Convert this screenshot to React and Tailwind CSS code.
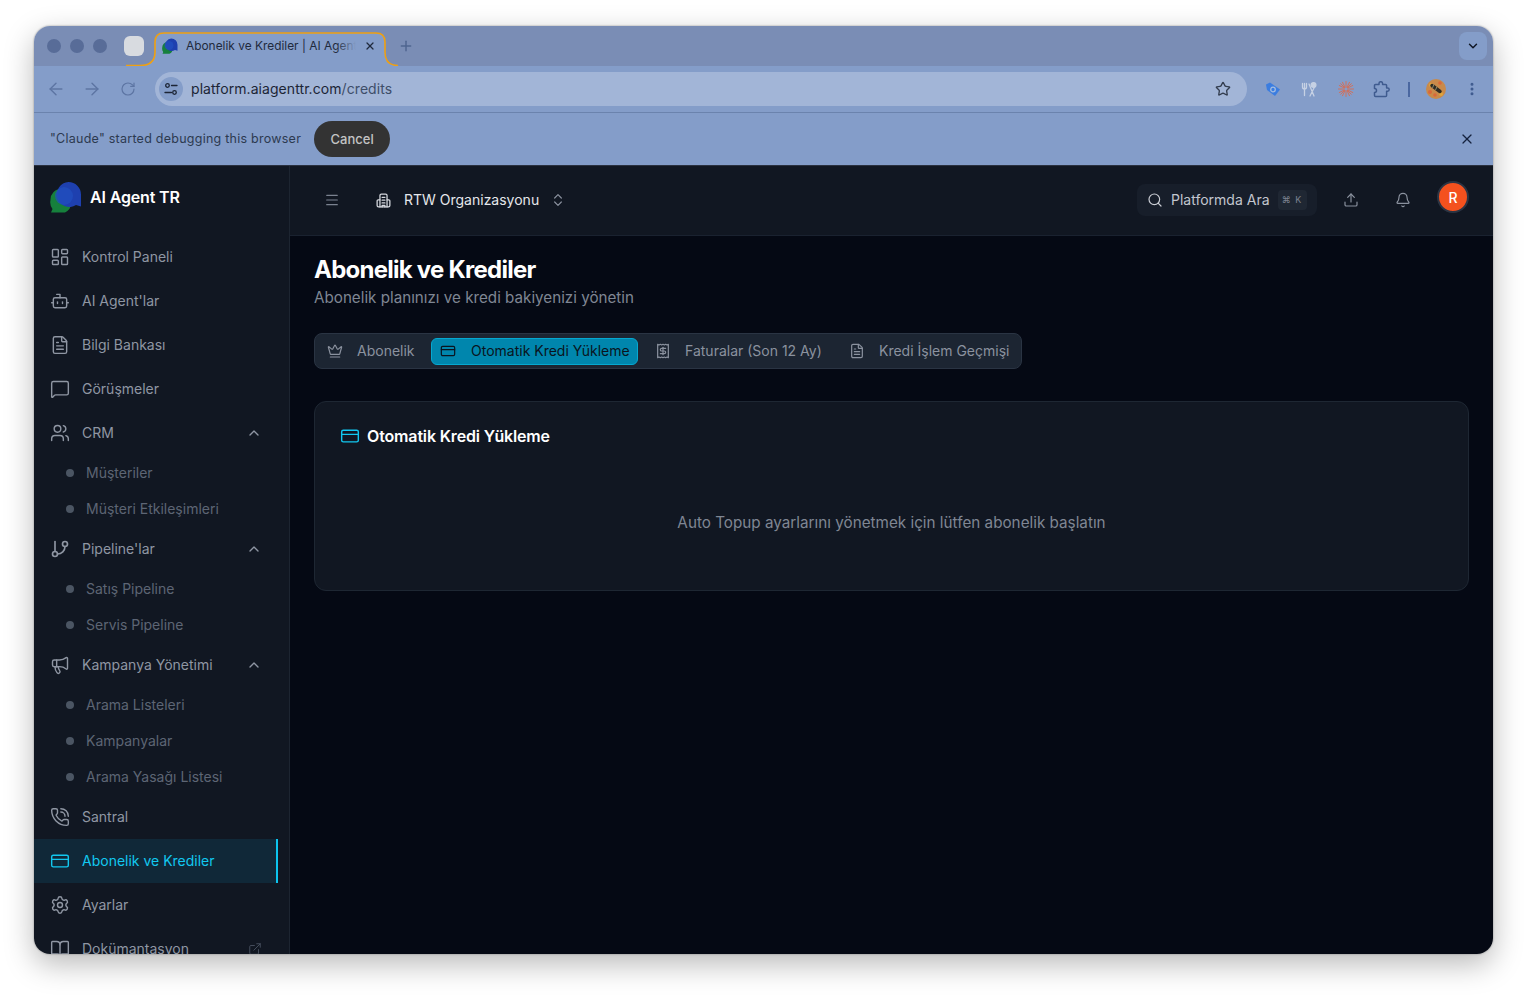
import React from "react";
import {
  ArrowLeft, ArrowRight, RotateCw, Star, X, Plus, ChevronDown, ChevronUp, ChevronsUpDown, EllipsisVertical,
  LayoutDashboard, Bot, FileText, MessageSquare, Users, Megaphone, PhoneCall, CreditCard, Settings, BookOpen,
  ExternalLink, Menu, Search, Upload, Bell, Crown, Receipt,
} from "lucide-react";

const Logo = ({ className }) => (
  <svg className={className} viewBox="0 0 32 32">
    <path d="M11 8a10.500 10.500 0 0 1 10 13 10.500 10.500 0 0 1-6 10.500H1l1.500-3.500A11 11 0 0 1 .500 19 10.500 10.500 0 0 1 11 8Z" fill="#16803c" />
    <path d="M18.500 1a12.500 12.500 0 0 1 12.500 12.500V25.500l-5-1.500A12.500 12.500 0 1 1 18.500 1Z" fill="#1e40af" />
    <circle cx="14" cy="15" r="9" fill="#2150c0" opacity="0.7" />
  </svg>
);

const PipelineIcon = ({ className }) => (
  <svg className={className} viewBox="0 0 24 24" fill="none" stroke="currentColor" strokeWidth="2" strokeLinecap="round" strokeLinejoin="round">
    <path d="M6 3v12" />
    <circle cx="18" cy="6" r="3" />
    <circle cx="6" cy="18" r="3" />
    <path d="M18 9a9 9 0 0 1-9 9" />
  </svg>
);

const OrgIcon = ({ className }) => (
  <svg className={className} viewBox="0 0 24 24" fill="none" stroke="currentColor" strokeWidth="1.800" strokeLinecap="round" strokeLinejoin="round">
    <path d="M7 21V5a2 2 0 0 1 2-2h6a2 2 0 0 1 2 2v16" />
    <path d="M7 11H4.500A1.500 1.500 0 0 0 3 12.500V19a2 2 0 0 0 2 2h14a2 2 0 0 0 2-2v-6.500a1.500 1.500 0 0 0-1.500-1.500H17" />
    <path d="M10 7.500h4M10 11.500h4M10 15.500h4M10 21v-2h4v2" />
  </svg>
);

const SiteIcon = () => (
  <svg className="w-[14px] h-[14px] text-[#1c2536]" viewBox="0 0 14 14" fill="none" stroke="currentColor" strokeWidth="1.300" strokeLinecap="round">
    <circle cx="3.500" cy="3.500" r="1.800" />
    <path d="M7.500 3.500H13M1 10.500h6.500" />
    <circle cx="10.500" cy="10.500" r="1.800" />
  </svg>
);

const TagIcon = () => (
  <svg className="w-[16px] h-[16px]" viewBox="0 0 16 16">
    <path d="M1 3.500 5 1.500 15 8.500 10 15 2 9Z" fill="#3b7de0" />
    <circle cx="8" cy="8.500" r="2.300" fill="none" stroke="#a2bce0" strokeWidth="1.300" />
  </svg>
);

const ForkIcon = () => (
  <svg className="w-[16px] h-[16px]" viewBox="0 0 16 16" fill="none" stroke="#c6d1e4" strokeWidth="1.300" strokeLinecap="round">
    <path d="M1.500 2.500v3.500a2 2 0 0 0 4 0V2.500M3.500 2.500v12M8 3l5 12M14 5 9 15" />
    <circle cx="12.500" cy="4" r="2.400" fill="#c6d1e4" />
  </svg>
);

const BurstIcon = () => (
  <svg className="w-[16px] h-[16px]" viewBox="0 0 16 16" stroke="#d0705c" strokeWidth="1" strokeLinecap="round">
    <path d="M8 .500v5.500M8 10v5.500M.500 8H6M10 8h5.500M2.700 2.700l3.900 3.900M9.400 9.400l3.900 3.900M13.300 2.700 9.400 6.600M6.600 9.400l-3.900 3.900M4.500 1.300l2.500 5M9 9.700l2.500 5M11.500 1.300 9 6.300M7 9.700l-2.500 5M1.300 4.500l5 2.500M9.700 9l5 2.500M14.700 4.500l-5 2.500M6.300 9l-5 2.500" />
  </svg>
);

const ExtensionIcon = () => (
  <svg className="w-[17px] h-[17px]" viewBox="0 0 17 17" fill="none" stroke="#3f5b8f" strokeWidth="1.500" strokeLinejoin="round">
    <path d="M2.500 3.500H6V2.500a1.800 1.800 0 0 1 3.600 0V3.500h3a1 1 0 0 1 1 1V7h1a1.600 1.600 0 0 1 0 3.200h-1v4.300a1 1 0 0 1-1 1H2.500a1 1 0 0 1-1-1V11.500a2 2 0 0 0 0-4V4.500a1 1 0 0 1 1-1Z" />
  </svg>
);

const ProfileIcon = () => (
  <svg className="w-[20px] h-[20px]" viewBox="0 0 20 20">
    <circle cx="10" cy="10" r="10" fill="#c98a4a" />
    <circle cx="5" cy="6" r="2" fill="#e0a53c" />
    <circle cx="14" cy="4" r="1.800" fill="#d9683a" />
    <circle cx="4" cy="13" r="2" fill="#d9683a" />
    <circle cx="15" cy="15" r="2" fill="#e0a53c" />
    <circle cx="9" cy="16" r="1.800" fill="#d9683a" />
    <path d="M6 6.500 14 12.500" stroke="#2f2c24" strokeWidth="3.500" strokeLinecap="round" />
    <path d="M8 5 6.500 9M11 7.500 9.500 11" stroke="#8d8a6a" strokeWidth="1" />
  </svg>
);

const navItems = [
  { label: "Kontrol Paneli", icon: LayoutDashboard },
  { label: "AI Agent'lar", icon: Bot },
  { label: "Bilgi Bankası", icon: FileText },
  { label: "Görüşmeler", icon: MessageSquare },
  { label: "CRM", icon: Users, children: ["Müşteriler", "Müşteri Etkileşimleri"] },
  { label: "Pipeline'lar", icon: PipelineIcon, children: ["Satış Pipeline", "Servis Pipeline"] },
  { label: "Kampanya Yönetimi", icon: Megaphone, children: ["Arama Listeleri", "Kampanyalar", "Arama Yasağı Listesi"] },
  { label: "Santral", icon: PhoneCall },
  { label: "Abonelik ve Krediler", icon: CreditCard, active: true },
  { label: "Ayarlar", icon: Settings },
  { label: "Dokümantasyon", icon: BookOpen, external: true },
];

const tabs = [
  { label: "Abonelik", icon: Crown, size: "w-[112px]" },
  { label: "Otomatik Kredi Yükleme", icon: CreditCard, size: "w-[207px]", active: true },
  { label: "Faturalar (Son 12 Ay)", icon: Receipt, size: "ml-[9px] w-[194px]" },
  { label: "Kredi İşlem Geçmişi", icon: FileText, size: "w-[170px]" },
];

const BrowserChrome = () => (
  <div className="shrink-0">
    <div className="relative h-[40px] bg-[#7a8db5] flex items-center pl-[13px] pr-[6px]">
      <svg className="absolute left-[92px] top-0 w-[272px] h-[40px]" viewBox="0 0 272 40" fill="none">
        <path d="M0 39.500H14Q29 39.500 29 26V16Q29 7 38 7H250Q259 7 259 16V26Q259 39.500 272 39.500V40H0Z" fill="#849dc9" />
        <path d="M0 39.500H14Q29 39.500 29 26V16Q29 7 38 7H250Q259 7 259 16V26Q259 39.500 272 39.500" stroke="#f0a010" strokeWidth="1.600" />
      </svg>
      <div className="flex gap-[9px]">
        <span className="w-[14px] h-[14px] rounded-full bg-[#586c98]" />
        <span className="w-[14px] h-[14px] rounded-full bg-[#586c98]" />
        <span className="w-[14px] h-[14px] rounded-full bg-[#586c98]" />
      </div>
      <span className="ml-[17px] w-[20px] h-[20px] rounded-[6px] bg-[#d8dbe0]" />
      <div className="relative ml-[18px] w-[214px] flex items-center">
        <Logo className="w-[16px] h-[16px] shrink-0" />
        <div className="relative ml-[8px] w-[170px] overflow-hidden whitespace-nowrap text-[11.900px] leading-[16px] text-[#1f2a3d]">
          Abonelik ve Krediler | AI Agent
          <span className="absolute right-0 top-0 w-[20px] h-full bg-gradient-to-r from-transparent to-[#849dc9]" />
        </div>
        <X className="w-[12px] h-[12px] ml-[8px] text-[#1f2a3d] shrink-0" strokeWidth={2.500} />
      </div>
      <Plus className="relative ml-[22px] w-[16px] h-[16px] text-[#4f6590]" strokeWidth={2.200} />
      <div className="ml-auto w-[28px] h-[28px] rounded-[8px] bg-[#849dc9] flex items-center justify-center">
        <ChevronDown className="w-[14px] h-[14px] text-[#111827]" strokeWidth={2.500} />
      </div>
    </div>

    <div className="h-[47px] bg-[#849dc9] border-b border-[#6b83ad] flex items-center pl-[12px] pr-[13px]">
      <ArrowLeft className="w-[20px] h-[20px] text-[#5d75a3]" strokeWidth={1.700} />
      <ArrowRight className="ml-[16px] w-[20px] h-[20px] text-[#5d75a3]" strokeWidth={1.700} />
      <RotateCw className="ml-[18px] w-[16px] h-[16px] text-[#5d75a3]" strokeWidth={1.800} />
      <div className="ml-[19px] w-[1092px] h-[34px] rounded-full bg-[#a2b5d7] flex items-center pl-[4px] pr-[16px]">
        <span className="w-[24px] h-[24px] rounded-full bg-[#849dc9] flex items-center justify-center">
          <SiteIcon />
        </span>
        <span className="ml-[8px] mb-[1px] text-[14px] tracking-[0.07px] text-[#1c2536]">
          platform.aiagenttr.com<span className="text-[#3e4e69]">/credits</span>
        </span>
        <Star className="ml-auto w-[16px] h-[16px] text-[#333d4f]" strokeWidth={2} />
      </div>
      <div className="ml-[18px] flex items-center">
        <TagIcon />
        <span className="ml-[20px]"><ForkIcon /></span>
        <span className="ml-[21px]"><BurstIcon /></span>
        <span className="ml-[19px]"><ExtensionIcon /></span>
        <span className="ml-[18px] w-[2px] h-[15px] bg-[#4a67a0]" />
        <span className="ml-[16px]"><ProfileIcon /></span>
        <EllipsisVertical className="ml-[18px] w-[16px] h-[16px] text-[#3f5b8f]" strokeWidth={2.500} />
      </div>
    </div>

    <div className="h-[53px] bg-[#849dc9] border-b border-[#2a3140] flex items-center pl-[16px] pr-[18px]">
      <span className="mt-[1px] text-[12.500px] tracking-[0.25px] text-[#2c3a50]">"Claude" started debugging this browser</span>
      <button className="ml-[13px] w-[76px] h-[36px] pt-[2px] rounded-full bg-[#333333] text-[13px] font-medium text-[#c4c4c4]">Cancel</button>
      <X className="ml-auto w-[16px] h-[16px] text-[#14213d]" strokeWidth={1.800} />
    </div>
  </div>
);

const Sidebar = () => (
  <aside className="w-[256px] shrink-0 bg-[#111722] border-r border-[#1d2531] overflow-hidden flex flex-col">
    <div className="h-[69px] shrink-0 flex items-start pl-[16px] pt-[15px]">
      <Logo className="w-[32px] h-[32px]" />
      <span className="ml-[8px] mt-[6px] text-[16px] leading-[20px] font-semibold tracking-[-0.15px] text-white">AI Agent TR</span>
    </div>
    <nav className="w-[244px] shrink-0">
      {navItems.map((item) => (
        <div key={item.label}>
          <div className={`h-[44px] flex items-center pl-[16px] pr-[16px] ${item.active ? "bg-[#102838] border-r-2 border-[#0cc4ee] text-[#12c8f0]" : "text-[#8f96a3]"}`}>
            <item.icon className="w-[20px] h-[20px] shrink-0" strokeWidth={1.700} />
            <span className="ml-[12px] mb-[2px] text-[14px]">{item.label}</span>
            {item.children && <ChevronUp className="ml-auto w-[16px] h-[16px]" strokeWidth={2} />}
            {item.external && <ExternalLink className="ml-auto w-[14px] h-[14px] text-[#4b5563]" strokeWidth={1.500} />}
          </div>
          {item.children && item.children.map((child) => (
            <div key={child} className="h-[36px] flex items-center pl-[32px]">
              <span className="w-[8px] h-[8px] rounded-full bg-[#4b5563]" />
              <span className="ml-[12px] mb-[2px] text-[14px] text-[#5d6574]">{child}</span>
            </div>
          ))}
        </div>
      ))}
    </nav>
  </aside>
);

const TopBar = () => (
  <header className="h-[70px] shrink-0 bg-[#111722] border-b border-[#1a2230] flex items-start pl-[34px] pr-[24px]">
    <Menu className="mt-[26px] w-[16px] h-[16px] text-[#7b8290]" strokeWidth={1.700} />
    <OrgIcon className="ml-[35px] mt-[26px] w-[17px] h-[17px] text-[#d5d8de]" />
    <span className="ml-[12px] mt-[24px] text-[14px] leading-[20px] text-[#e5e7eb]">RTW Organizasyonu</span>
    <ChevronsUpDown className="ml-[11px] mt-[26px] w-[16px] h-[16px] text-[#8a919e]" strokeWidth={1.800} />
    <div className="ml-auto mt-[18px] w-[180px] h-[32px] rounded-lg bg-[#171e2a] flex items-center pl-[10px]">
      <Search className="w-[16px] h-[16px] text-[#c9ccd3]" strokeWidth={1.800} />
      <span className="ml-[8px] mb-[2px] text-[14px] text-[#c2c6ce]">Platformda Ara</span>
      <span className="ml-[8px] w-[29px] h-[20px] rounded-[4px] bg-[#1f2733] flex items-center justify-center text-[9px] tracking-[1px] text-[#7b8290]">⌘ K</span>
    </div>
    <Upload className="ml-[26px] mt-[26px] w-[16px] h-[16px] text-[#8a919e]" strokeWidth={1.800} />
    <Bell className="ml-[36px] mt-[26px] w-[16px] h-[16px] text-[#8a919e]" strokeWidth={1.800} />
    <div className="ml-[26px] mt-[15px] w-[32px] h-[32px] rounded-full bg-[#f4511e] border-2 border-[#2b3443] flex items-center justify-center text-[14px] font-medium text-white">R</div>
  </header>
);

const TabBar = () => (
  <div className="mt-[23px] w-[708px] h-[36px] rounded-lg bg-[#1c2532] border border-[#2a3443] flex items-center pl-[4px]">
    {tabs.map((tab) => (
      <div
        key={tab.label}
        className={`h-[27px] flex items-center rounded-[6px] border ${tab.size} ${tab.active ? "bg-[#0086ad] border-[#06a8d0] text-[#0a1420] pl-[8px]" : "border-transparent text-[#8b929f] pl-[7px]"}`}
      >
        <tab.icon className="w-[16px] h-[16px] shrink-0" strokeWidth={1.800} />
        <span className={`mb-[2px] text-[14px] whitespace-nowrap ${tab.active ? "ml-[15px]" : "ml-[14px]"}`}>{tab.label}</span>
      </div>
    ))}
  </div>
);

const App = () => (
  <div className="w-[1527px] h-[996px] bg-white overflow-hidden pl-[34px] pt-[26px] font-['Inter',sans-serif]">
    <div className="w-[1459px] h-[928px] rounded-[16px] overflow-hidden flex flex-col shadow-[0_10px_30px_rgba(0,0,0,0.28),0_0_2px_rgba(0,0,0,0.4)]">
      <BrowserChrome />
      <div className="flex flex-1 min-h-0">
        <Sidebar />
        <div className="flex-1 min-w-0 flex flex-col bg-[#050914]">
          <TopBar />
          <main className="flex-1 pl-[24px] pr-[24px] pt-[20px]">
            <h1 className="text-[24px] leading-[28px] font-bold tracking-[-0.75px] text-white">Abonelik ve Krediler</h1>
            <p className="mt-[2px] text-[15.200px] leading-[24px] text-[#7f8693]">Abonelik planınızı ve kredi bakiyenizi yönetin</p>
            <TabBar />
            <section className="mt-[32px] h-[190px] rounded-xl bg-[#111722] border border-[#1e2733] pt-[24px] pl-[25px]">
              <div className="flex items-center">
                <CreditCard className="w-[20px] h-[20px] text-[#12c8f0]" strokeWidth={1.700} />
                <h2 className="ml-[7px] text-[16px] leading-[20px] font-semibold tracking-[-0.15px] text-white">Otomatik Kredi Yükleme</h2>
              </div>
              <p className="mt-[65px] pr-[25px] text-center text-[15.250px] leading-[24px] text-[#7f8693]">Auto Topup ayarlarını yönetmek için lütfen abonelik başlatın</p>
            </section>
          </main>
        </div>
      </div>
    </div>
  </div>
);

export default App;
